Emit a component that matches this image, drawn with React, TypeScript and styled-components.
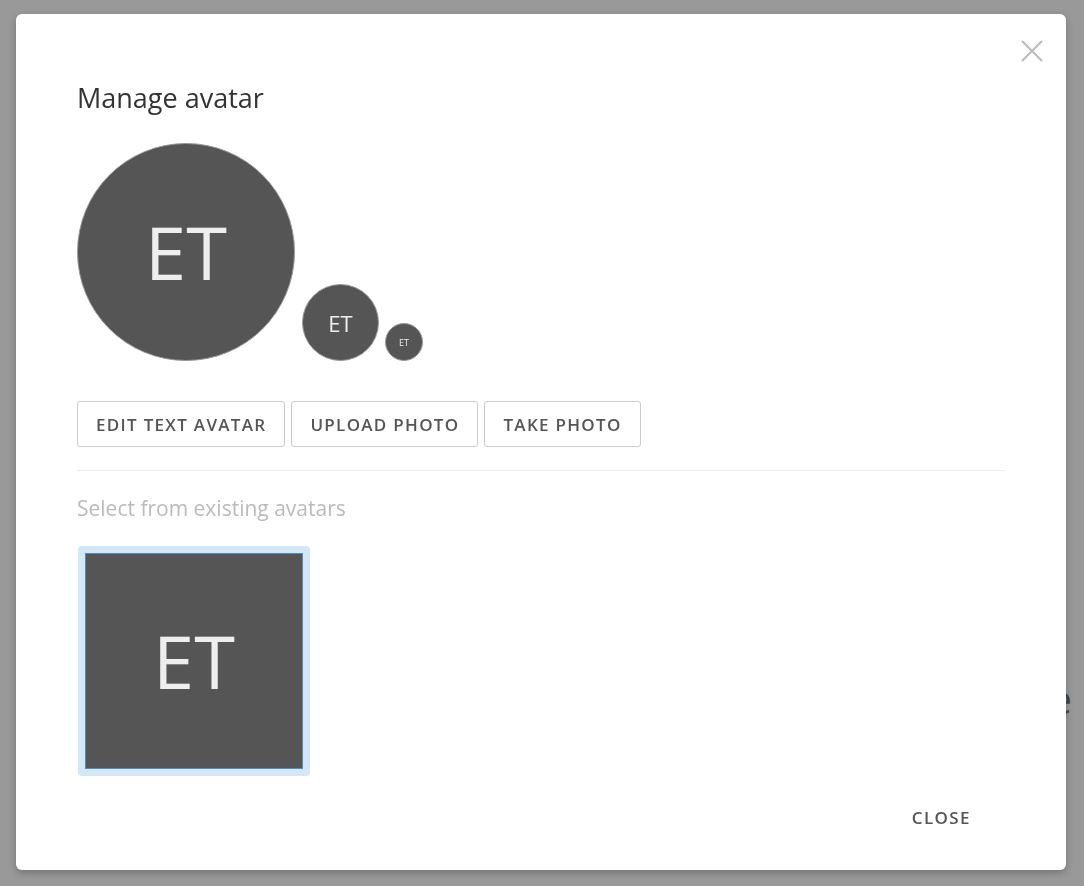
import React from 'react'
import styled, { createGlobalStyle } from 'styled-components'

const GlobalStyle = createGlobalStyle`
    html, body {
        margin: 0;
        padding: 0;
        height: 100%;
    }
    body {
        font-family: "Open Sans", "Liberation Sans", sans-serif;
        background: #ffffff;
        overflow: hidden;
    }
    #root {
        height: 100%;
    }
`

// page that sits behind the dialog
const Page = styled.div`
    height: 100%;
    display: flex;
    flex-direction: column;
    justify-content: flex-end;
    align-items: flex-end;
    padding: 0 12px 160px 0;
    box-sizing: border-box;
`

const PageHeading = styled.h1`
    margin: 0;
    font-size: 40px;
    font-weight: 400;
    color: #777;
`

const Overlay = styled.div`
    position: fixed;
    inset: 0;
    background: rgba(0, 0, 0, 0.4);
    display: flex;
    padding: 14px 18px 16px 16px;
    box-sizing: border-box;
`

const Modal = styled.div`
    position: relative;
    flex: 1;
    display: flex;
    flex-direction: column;
    background: #fff;
    border-radius: 6px;
    box-shadow: 0 3px 9px rgba(0, 0, 0, 0.25);
    padding: 66px 61px 0 61px;
    box-sizing: border-box;
`

const CloseIcon = styled.button`
    position: absolute;
    top: 26px;
    right: 23px;
    width: 22px;
    height: 22px;
    padding: 0;
    border: none;
    background: none;
    cursor: pointer;
    svg {
        display: block;
    }
`

const Title = styled.h2`
    margin: 0;
    font-size: 27px;
    font-weight: 400;
    color: #333;
    line-height: 35px;
`

const AvatarRow = styled.div`
    display: flex;
    align-items: flex-end;
    margin-top: 28px;
`

const Circle = styled.div<{ size: number; fontSize: number; gap?: number }>`
    width: ${({ size }) => size}px;
    height: ${({ size }) => size}px;
    margin-left: ${({ gap }) => gap || 0}px;
    border-radius: 50%;
    background: #555;
    border: 1px solid #9a9a9a;
    box-sizing: border-box;
    display: flex;
    align-items: center;
    justify-content: center;
    color: #eee;
    font-size: ${({ fontSize }) => fontSize}px;
    font-weight: 500;
    line-height: 1;
`

const ButtonRow = styled.div`
    display: flex;
    gap: 6px;
    margin-top: 40px;
`

const OutlineButton = styled.button`
    height: 46px;
    padding: 0 18px;
    background: #fff;
    border: 1px solid #ccc;
    border-radius: 3px;
    font-family: inherit;
    font-size: 17px;
    font-weight: 600;
    letter-spacing: 1.3px;
    color: #555;
    cursor: pointer;
`

const Divider = styled.hr`
    margin: 23px 0 0;
    border: none;
    border-top: 1px solid #eee;
`

const Subtitle = styled.div`
    margin-top: 23px;
    font-size: 21px;
    color: #bbb;
    line-height: 28px;
`

const Grid = styled.div`
    display: flex;
    margin-top: 24px;
    padding-left: 1px;
`

const Tile = styled.div<{ selected?: boolean }>`
    padding: 7px;
    border-radius: 4px;
    background: ${({ selected }) => (selected ? '#d3e7f7' : 'transparent')};
`

const TileImage = styled.div<{ selected?: boolean }>`
    width: 218px;
    height: 216px;
    box-sizing: border-box;
    background: #555;
    border: 1px solid ${({ selected }) => (selected ? '#4a8ccf' : '#555')};
    display: flex;
    align-items: center;
    justify-content: center;
    color: #eee;
    font-size: 74px;
    font-weight: 500;
    line-height: 1;
`

const Footer = styled.div`
    display: flex;
    justify-content: flex-end;
    margin-top: 24px;
    margin-right: 22px;
`

const TextButton = styled.button`
    padding: 6px 12px;
    background: none;
    border: none;
    font-family: inherit;
    font-size: 17px;
    font-weight: 600;
    letter-spacing: 1.4px;
    color: #555;
    cursor: pointer;
`

export default function App() {
    const initials = 'ET'

    return (
        <>
            <GlobalStyle />
            <Page>
                <PageHeading>Welcome</PageHeading>
            </Page>
            <Overlay>
                <Modal>
                    <CloseIcon aria-label="Close">
                        <svg width="22" height="22" viewBox="0 0 22 22">
                            <path d="M1 1L21 21M21 1L1 21" stroke="#bbb" strokeWidth="2" />
                        </svg>
                    </CloseIcon>
                    <Title>Manage avatar</Title>
                    <AvatarRow>
                        <Circle size={218} fontSize={74}>{initials}</Circle>
                        <Circle size={77} fontSize={22} gap={7}>{initials}</Circle>
                        <Circle size={38} fontSize={9} gap={6}>{initials}</Circle>
                    </AvatarRow>
                    <ButtonRow>
                        <OutlineButton>EDIT TEXT AVATAR</OutlineButton>
                        <OutlineButton>UPLOAD PHOTO</OutlineButton>
                        <OutlineButton>TAKE PHOTO</OutlineButton>
                    </ButtonRow>
                    <Divider />
                    <Subtitle>Select from existing avatars</Subtitle>
                    <Grid>
                        <Tile selected>
                            <TileImage selected>{initials}</TileImage>
                        </Tile>
                    </Grid>
                    <Footer>
                        <TextButton>CLOSE</TextButton>
                    </Footer>
                </Modal>
            </Overlay>
        </>
    )
}
